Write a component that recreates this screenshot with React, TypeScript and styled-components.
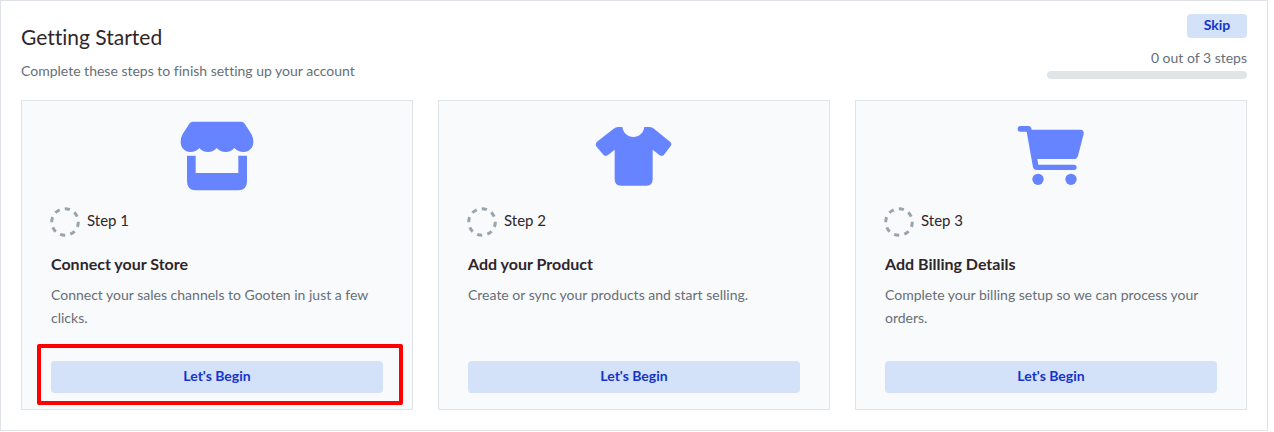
import React from "react";
import styled, { createGlobalStyle } from "styled-components";

const GlobalStyle = createGlobalStyle`
  *, *::before, *::after { box-sizing: border-box; }
  body {
    margin: 0;
    background: #ffffff;
    color: #2f262b;
    font-family: Lato, "Liberation Sans", sans-serif;
    font-size: 15px;
    font-variant-ligatures: none;
    line-height: 23px;
  }
  h1, h2, p { margin: 0; }
`;

const Panel = styled.main`
  margin-right: 6px;
  padding: 13px 20px 20px;
  border: 1px solid #dfe3e7;
`;

const Header = styled.header`
  display: flex;
  justify-content: space-between;
  align-items: flex-start;
  margin-bottom: 18px;
`;

const Intro = styled.div`
  padding-top: 8px;
`;

const Title = styled.h1`
  margin-bottom: 7px;
  font-size: 21px;
  font-weight: 400;
  line-height: 30px;
`;

const Muted = styled.p`
  color: #666f77;
  font-size: 14px;
`;

const Status = styled.div`
  display: flex;
  flex-direction: column;
  align-items: flex-end;
`;

const ActionButton = styled.button<{ $compact?: boolean }>`
  display: block;
  width: ${(p) => (p.$compact ? "60px" : "100%")};
  height: ${(p) => (p.$compact ? "24px" : "32px")};
  padding: 0 0 2px;
  border: 0;
  border-radius: 4px;
  background: #d3e1f9;
  color: #1534cb;
  font: inherit;
  font-size: 14px;
  font-weight: 700;
  line-height: 20px;
  cursor: pointer;
`;

const StepCount = styled.label`
  margin: 8px 0 2px;
  color: #666f77;
  font-size: 14px;
`;

const Progress = styled.progress`
  appearance: none;
  display: block;
  width: 200px;
  height: 8px;
  border: 0;
  border-radius: 4px;
  overflow: hidden;
  background: #e1e5e8;

  &::-webkit-progress-bar { background: #e1e5e8; }
  &::-webkit-progress-value { background: #6684ff; }
`;

const Cards = styled.section`
  display: grid;
  grid-template-columns: repeat(3, 1fr);
  gap: 25px;
`;

const Card = styled.article`
  display: flex;
  flex-direction: column;
  min-height: 310px;
  padding: 15px 29px 16px;
  border: 1px solid #dfe4e8;
  background: #f9fafc;
`;

const Icon = styled.svg`
  align-self: center;
  width: 80px;
  height: 80px;
  fill: #6684ff;
`;

const StepRow = styled.div`
  display: flex;
  align-items: flex-start;
  gap: 8px;
  margin: 12px 0 16px;
  line-height: 25px;
`;

const Ring = styled.svg`
  width: 28px;
  height: 28px;
  overflow: visible;
  fill: none;
  stroke: #98a5ad;
  stroke-width: 3;
`;

const CardTitle = styled.h2`
  margin-bottom: 7px;
  font-size: 16px;
  font-weight: 700;
  line-height: 24px;
`;

const Action = styled.div`
  position: relative;
  margin-top: auto;
`;

const Highlight = styled.span`
  position: absolute;
  inset: -17px -20px -12px -14px;
  border: 4px solid #ff0000;
  border-radius: 2px;
  pointer-events: none;
`;

const StoreIcon = () => (
  <Icon viewBox="51 33 240 240" aria-hidden="true">
    <path d="M98 50H245Q250 50 253 55L274 87Q280 97 280 111C280 128 268 141 251 141Q234 141 223 129Q213 141 197 141Q181 141 170 129Q160 141 144 141Q128 141 118 129Q108 141 91 141C74 141 62 128 62 111Q62 97 68 87L89 55Q92 50 98 50Z" />
    <path d="M81 152H107V204H235V152H261V229Q261 256 235 256H107Q81 256 81 229Z" />
  </Icon>
);

const ShirtIcon = () => (
  <Icon viewBox="42 33 240 240" aria-hidden="true">
    <path d="M127 66C130 85 144 96 160 96C177 96 190 85 193 66H207Q214 66 220 70L270 110Q277 116 272 123L252 149Q247 155 239 151L218 134V223Q218 242 200 242H123Q104 242 104 223V134L83 151Q75 155 70 149L50 125Q44 117 51 110L101 71Q107 66 115 66Z" />
  </Icon>
);

const CartIcon = () => (
  <Icon viewBox="33 33 240 240" aria-hidden="true">
    <path d="M61 63H86Q93 63 95 74H240Q253 74 251 87L234 152Q231 162 222 162H112L115 179H222Q230 179 230 187Q230 195 222 195H108Q101 195 99 187L80 80H61Q53 80 53 72Q53 63 61 63Z" />
    <circle cx="114" cy="223" r="17" />
    <circle cx="213" cy="223" r="17" />
  </Icon>
);

const steps = [
  {
    icon: <StoreIcon />,
    title: "Connect your Store",
    text: "Connect your sales channels to Gooten in just a few clicks.",
    highlighted: true,
  },
  {
    icon: <ShirtIcon />,
    title: "Add your Product",
    text: "Create or sync your products and start selling.",
  },
  {
    icon: <CartIcon />,
    title: "Add Billing Details",
    text: "Complete your billing setup so we can process your orders.",
  },
];

export default function App() {
  return (
    <>
      <GlobalStyle />
      <Panel>
        <Header>
          <Intro>
            <Title>Getting Started</Title>
            <Muted>Complete these steps to finish setting up your account</Muted>
          </Intro>
          <Status>
            <ActionButton type="button" $compact>Skip</ActionButton>
            <StepCount htmlFor="setup-progress">0 out of 3 steps</StepCount>
            <Progress id="setup-progress" value={0} max={3} />
          </Status>
        </Header>
        <Cards>
          {steps.map((step, i) => (
            <Card key={step.title}>
              {step.icon}
              <StepRow>
                <Ring viewBox="0 0 28 28" aria-hidden="true">
                  <circle cx="14" cy="14" r="13.3" pathLength={80} strokeDasharray="5 5" transform="rotate(-1 14 14)" />
                </Ring>
                <span>Step {i + 1}</span>
              </StepRow>
              <CardTitle>{step.title}</CardTitle>
              <Muted>{step.text}</Muted>
              <Action>
                <ActionButton type="button">Let's Begin</ActionButton>
                {step.highlighted && <Highlight />}
              </Action>
            </Card>
          ))}
        </Cards>
      </Panel>
    </>
  );
}
